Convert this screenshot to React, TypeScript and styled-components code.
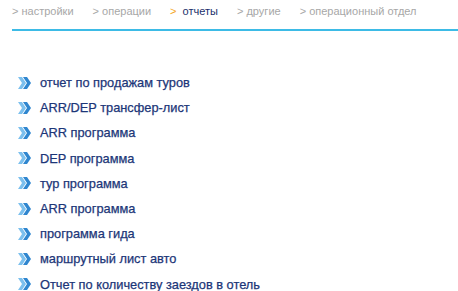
import styled, { createGlobalStyle } from 'styled-components';

const GlobalStyle = createGlobalStyle`
  html, body {
    margin: 0;
    padding: 0;
    background: #ffffff;
  }
  body {
    font-family: 'Liberation Sans', Arial, sans-serif;
  }
`;

const tabs = [
  { label: 'настройки', active: false },
  { label: 'операции', active: false },
  { label: 'отчеты', active: true },
  { label: 'другие', active: false },
  { label: 'операционный отдел', active: false },
];

const reports = [
  'отчет по продажам туров',
  'ARR/DEP трансфер-лист',
  'ARR программа',
  'DEP программа',
  'тур программа',
  'ARR программа',
  'программа гида',
  'маршрутный лист авто',
  'Отчет по количеству заездов в отель',
];

const ArrowIcon = () => (
  <svg width="13" height="12" viewBox="0 0 13 12">
    <polygon points="0,0 4,0 8,6 4,12 0,12 4,6" fill="#7cc0ee" />
    <polygon points="5,0 9,0 13,6 9,12 5,12 9,6" fill="#2f86cf" />
  </svg>
);

export default function App() {
  return (
    <>
      <GlobalStyle />
      <Page>
        <Menu>
          {tabs.map((t) => (
            <Tab key={t.label} $active={t.active}>
              <Caret $active={t.active}>&gt;</Caret> {t.label}
            </Tab>
          ))}
        </Menu>
        <ReportList>
          {reports.map((r, i) => (
            <ReportItem key={i}>
              <ArrowIcon />
              <ReportLink href="#">{r}</ReportLink>
            </ReportItem>
          ))}
        </ReportList>
      </Page>
    </>
  );
}

const Page = styled.div`
  width: 458px;
  padding-left: 12px;
  box-sizing: border-box;
`;

const Menu = styled.div`
  display: flex;
  gap: 19px;
  padding-top: 4px;
  height: 31px;
  border-bottom: 2px solid #3dbbe6;
  box-sizing: border-box;
`;

const Tab = styled.span<{ $active: boolean }>`
  font-size: 11px;
  line-height: 14px;
  color: ${(p) => (p.$active ? '#1c2f6b' : '#a7a7a7')};
  white-space: nowrap;
`;

const Caret = styled.span<{ $active: boolean }>`
  color: ${(p) => (p.$active ? '#f5a623' : '#a7a7a7')};
  ${(p) => (p.$active ? 'margin-right: 3px;' : '')}
`;

const ReportList = styled.ul`
  list-style: none;
  margin: 0;
  padding: 39px 0 0 6px;
`;

const ReportItem = styled.li`
  display: flex;
  align-items: center;
  gap: 9px;
  height: 25.2px;
`;

const ReportLink = styled.a`
  font-size: 12.8px;
  color: #1c3678;
  text-decoration: none;
  -webkit-text-stroke: 0.25px #1c3678;
`;
